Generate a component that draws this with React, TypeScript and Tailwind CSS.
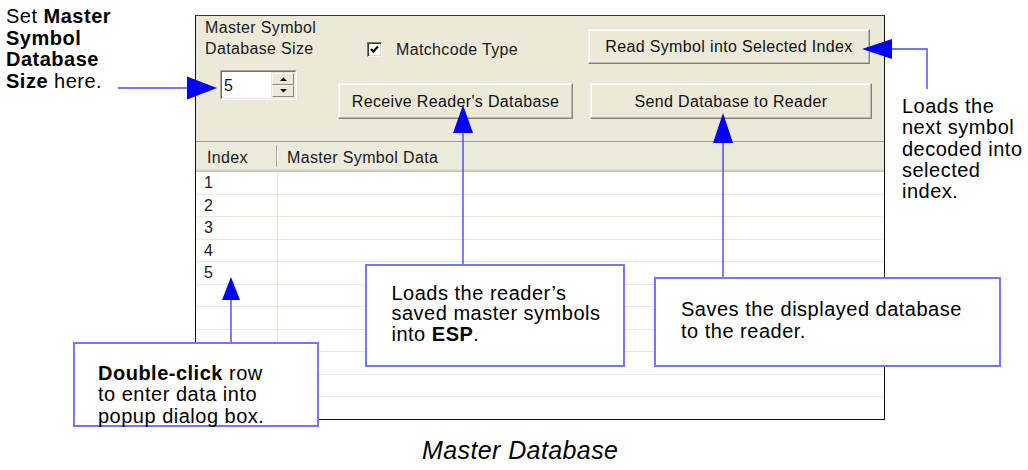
import React from "react";

function XPButton({ children, className }: { children: React.ReactNode; className?: string }) {
  return (
    <div
      className={`flex items-center justify-center whitespace-nowrap bg-[#ece9d8] border border-t-[#f7f6f1] border-l-[#f7f6f1] border-b-[#868474] border-r-[#868474] shadow-[inset_-1px_-1px_0_#bcb9a9,inset_1px_1px_0_#ffffff] text-[#111] ${className ?? ""}`}
    >
      {children}
    </div>
  );
}

function SpinBtn({ up }: { up?: boolean }) {
  return (
    <div className="flex-1 flex items-center justify-center bg-[#ece9d8] border border-t-[#f7f6f1] border-l-[#f7f6f1] border-r-[#8d8b7b] border-b-[#8d8b7b]">
      <svg width="7" height="4" viewBox="0 0 7 4">
        {up ? <polygon points="0,4 3.5,0.5 7,4" fill="#111" /> : <polygon points="0,0 3.5,3.5 7,0" fill="#111" />}
      </svg>
    </div>
  );
}

export default function App() {
  const rows = Array.from({ length: 11 }, (_, i) => (i < 5 ? String(i + 1) : ""));
  const line = "#4646ff";
  const tri = "#0000ff";
  return (
    <div className="relative w-[1028px] h-[470px] overflow-hidden bg-white font-['Liberation_Sans',Arial,sans-serif] text-black">
      <div className="flex">
        {/* left annotation */}
        <div className="w-[195px] shrink-0 pl-[6px] pt-[6px] text-[20px] leading-[21.5px] tracking-[0.5px] whitespace-nowrap">
          Set <b>Master</b>
          <br />
          <b>Symbol</b>
          <br />
          <b>Database</b>
          <br />
          <b>Size</b> here.
        </div>

        {/* window */}
        <div className="mt-[15px] w-[690px] h-[405px] shrink-0 border border-[#111] border-t-[#3a3a3a] flex flex-col overflow-hidden text-[16px] leading-[21px] tracking-[0.35px] text-[#1a1a1a]">
          {/* top panel */}
          <div className="h-[125px] shrink-0 bg-[#ece9d8] flex">
            {/* column A */}
            <div className="w-[142px] shrink-0 pl-[9px] pt-[1px]">
              <div className="whitespace-nowrap">
                Master Symbol
                <br />
                Database Size
              </div>
              <div className="ml-[15px] mt-[11px] w-[77px] h-[30px] flex border border-t-[#aca899] border-l-[#aca899] border-r-white border-b-white">
                <div className="flex flex-1 border border-t-[#716f64] border-l-[#716f64] border-r-[#f1efe2] border-b-[#f1efe2] bg-white">
                  <div className="flex-1 flex items-center pl-[2px]">5</div>
                  <div className="w-[24px] flex flex-col p-[1px] bg-[#ece9d8]">
                    <SpinBtn up />
                    <SpinBtn />
                  </div>
                </div>
              </div>
            </div>

            {/* column B */}
            <div className="w-[235px] shrink-0">
              <div className="mt-[23px] h-[21px] flex items-center pl-[29px] gap-[14px] whitespace-nowrap">
                <div className="w-[15px] h-[15px] shrink-0 bg-white border border-t-[#7a786b] border-l-[#7a786b] border-r-[#f4f2ea] border-b-[#f4f2ea] shadow-[inset_1px_1px_0_#3c3c36,inset_-1px_-1px_0_#d8d5c6] flex items-center justify-center">
                  <svg width="11" height="11" viewBox="0 0 11 11">
                    <polyline points="2,5 4.3,7.6 9,2.6" fill="none" stroke="#000" strokeWidth="2.2" />
                  </svg>
                </div>
                <span>Matchcode Type</span>
              </div>
              <XPButton className="mt-[23px] w-[235px] h-[36px]">Receive Reader's Database</XPButton>
            </div>

            {/* column C */}
            <div className="ml-[15px] shrink-0">
              <XPButton className="mt-[13px] w-[282px] h-[35px]">Read Symbol into Selected Index</XPButton>
              <XPButton className="mt-[19px] ml-[2px] w-[282px] h-[36px]">Send Database to Reader</XPButton>
            </div>
          </div>

          {/* list header */}
          <div className="h-[31px] shrink-0 flex bg-[#ebeadb] border-t border-[#9d9a8a] shadow-[inset_0_-1px_0_#c7c3b2,inset_0_-2px_0_#d6d2c2,inset_0_-3px_0_#e2dece]">
            <div className="relative w-[82px] shrink-0 pl-[11px] pt-[5px]">
              Index
              <span className="absolute right-0 top-[3px] bottom-[5px] w-[2px] border-l border-l-[#aca899] border-r border-r-white" />
            </div>
            <div className="pl-[9px] pt-[5px] whitespace-nowrap">Master Symbol Data</div>
          </div>

          {/* rows */}
          <div className="flex-1 bg-white">
            {rows.map((r, i) => (
              <div key={i} className="h-[22.5px] flex border-b border-[#ebe8da]">
                <div className="w-[82px] shrink-0 border-r border-[#ebe8da] pl-[8px] flex items-center">{r}</div>
                <div className="flex-1" />
              </div>
            ))}
          </div>
        </div>

        {/* right annotation */}
        <div className="pl-[17px] pt-[96px] text-[20px] leading-[21.3px] tracking-[0.5px] whitespace-nowrap">
          Loads the
          <br />
          next symbol
          <br />
          decoded into
          <br />
          selected
          <br />
          index.
        </div>
      </div>

      {/* caption */}
      <div className="pl-[422px] mt-[18px] text-[25px] leading-[25px] italic tracking-[0.4px] whitespace-nowrap">
        Master Database
      </div>

      {/* callouts */}
      <div className="absolute left-[73px] top-[342px] w-[246px] h-[85px] border-2 border-[#7474ff] bg-white pl-[23px] pt-[18.5px] text-[20px] leading-[21.7px] tracking-[0.5px] whitespace-nowrap">
        <b>Double-click</b> row
        <br />
        to enter data into
        <br />
        popup dialog box.
      </div>
      <div className="absolute left-[365px] top-[264px] w-[260px] h-[103px] border-2 border-[#7474ff] bg-white pl-[24.5px] pt-[16.5px] text-[20px] leading-[20.7px] tracking-[0.5px] whitespace-nowrap">
        Loads the reader’s
        <br />
        saved master symbols
        <br />
        into <b>ESP</b>.
      </div>
      <div className="absolute left-[654px] top-[277px] w-[347px] h-[90px] border-2 border-[#7474ff] bg-white pl-[25px] pt-[18.5px] text-[20px] leading-[22px] tracking-[0.5px] whitespace-nowrap">
        Saves the displayed database
        <br />
        to the reader.
      </div>

      {/* arrows */}
      <svg className="absolute left-0 top-0 pointer-events-none" width="1028" height="470" viewBox="0 0 1028 470">
        <line x1="118" y1="88" x2="188" y2="88" stroke={line} strokeWidth="1.4" />
        <polygon points="187,76.5 217,88 187,99.5" fill={tri} />
        <polyline points="891,49 927,49 927,89" fill="none" stroke={line} strokeWidth="1.4" />
        <polygon points="892,39 862,49 892,59" fill={tri} />
        <line x1="463" y1="132" x2="463" y2="264" stroke={line} strokeWidth="1.4" />
        <polygon points="453,133 463,105 473,133" fill={tri} />
        <line x1="723" y1="142" x2="723" y2="277" stroke={line} strokeWidth="1.4" />
        <polygon points="713,143 723,113 733,143" fill={tri} />
        <line x1="231" y1="299" x2="231" y2="342" stroke={line} strokeWidth="1.4" />
        <polygon points="222,300 231,277 240,300" fill={tri} />
      </svg>
    </div>
  );
}
